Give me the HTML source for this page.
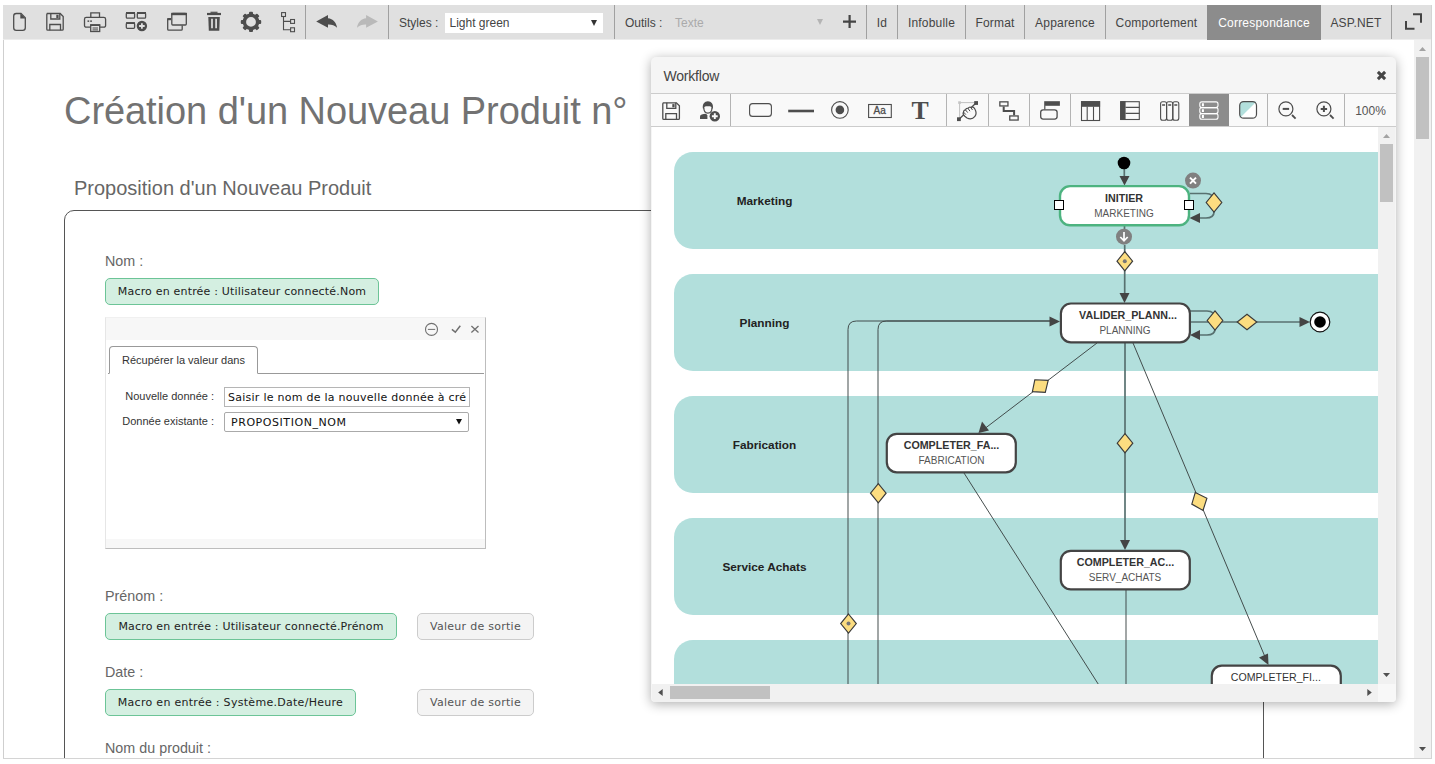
<!DOCTYPE html>
<html lang="fr">
<head>
<meta charset="utf-8">
<title>Création d'un Nouveau Produit</title>
<style>
*{box-sizing:border-box;margin:0;padding:0}
html,body{width:1435px;height:764px;overflow:hidden;background:#fff}
body{position:relative;font-family:"Liberation Sans",Arial,sans-serif;color:#444;font-size:12px}
.abs{position:absolute}
/* outer frame */
#frame{position:absolute;left:3px;top:5px;width:1429px;height:754px;border:1px solid #d4d4d4;border-left-color:#cfcfcf;border-top:0}
/* top toolbar */
#tb{position:absolute;left:3px;top:5px;width:1428px;height:35px;background:linear-gradient(#e0e0e0 0,#e0e0e0 34px,#ececec 34px)}
#tb .sep{position:absolute;top:0;width:1px;height:34px;background:#a0a0a0}
#tb .tab{position:absolute;top:0;height:35px;line-height:36px;text-align:center;font-size:12px;color:#444;white-space:nowrap;letter-spacing:.2px}
#tb .tab.on{background:#8c8c8c;color:#fff}
#tb .lbl{position:absolute;top:0;height:35px;line-height:36px;font-size:12px;color:#444;white-space:nowrap}
#tb svg{position:absolute}
.vd{font-family:"DejaVu Sans",Verdana,sans-serif}
/* form */
.h1{position:absolute;left:64px;top:89px;font-size:38px;line-height:44px;color:#727272;white-space:nowrap;letter-spacing:-.06px}
.h2{position:absolute;left:74px;top:176px;font-size:20px;line-height:24px;color:#666;white-space:nowrap}
#fs{position:absolute;left:64px;top:210px;width:1200px;height:600px;border:1px solid #555;border-radius:10px 0 0 0}
.flabel{position:absolute;left:105px;font-size:14.300px;line-height:18px;color:#666;white-space:nowrap;letter-spacing:.02px}
.pill{position:absolute;height:26px;line-height:25px;border:1px solid #6cc497;background:#d4efe1;border-radius:5px;font-family:"DejaVu Sans",Verdana,sans-serif;font-size:11px;color:#222;text-align:center;white-space:nowrap}
.btn{position:absolute;height:27px;line-height:26.500px;border:1px solid #ccc;background:#f4f4f4;border-radius:5px;font-family:"DejaVu Sans",Verdana,sans-serif;font-size:11px;color:#555;text-align:center;white-space:nowrap;letter-spacing:.27px}
/* mapping panel */
#mp{position:absolute;left:105px;top:317px;width:381px;height:232px;border:1px solid #bdbdbd;border-left-color:#e6e6e6;border-top-color:#f0f0f0;background:#fff}
#mp .hd{position:absolute;left:0;top:0;width:379px;height:22px;background:#f7f7f7}
#mp .ft{position:absolute;left:0;bottom:0;width:379px;height:9px;background:#f7f7f7}
#mp .tabline{position:absolute;left:2px;top:55px;width:376px;height:1px;background:#999}
#mp .tab1{position:absolute;left:3px;top:28px;width:149px;height:28px;border:1px solid #999;border-bottom:1px solid #fff;border-radius:4px 4px 0 0;background:#fff;font-size:11px;line-height:27px;text-align:center;color:#333;white-space:nowrap}
#mp .l{position:absolute;right:271px;font-size:11px;line-height:14px;color:#333;white-space:nowrap;text-align:right}
#mp .inp{position:absolute;left:118px;width:247px;height:21px;border:1px solid #999;background:#fff;font-family:"DejaVu Sans",Verdana,sans-serif;color:#111;white-space:nowrap;overflow:hidden}
.wsep{position:absolute;top:37px;width:1px;height:32px;background:#b4b4b4}
</style>
</head>
<body>
<div id="frame"></div>

<!-- ============ TOP TOOLBAR ============ -->
<div id="tb">
  <!--ICONS_S--><svg style="left:0;top:0" width="400" height="34" viewBox="3 5 400 34" fill="none" stroke="#4d4d4d" stroke-width="1.3">
    <!-- new file -->
    <path d="M16.3 13.500H21L25.300 17.800V27.700a2.600 2.600 0 0 1-2.600 2.600H16.300a2.600 2.600 0 0 1-2.600-2.600V16.100a2.600 2.600 0 0 1 2.600-2.600z"/>
    <path d="M20.300 13.400L25.500 18.600H20.300z" fill="#4d4d4d" stroke="none"/>
    <!-- save -->
    <path d="M46.800 13.500H60.200L63.200 16.500V29.200a1 1 0 0 1-1 1H47.800a1 1 0 0 1-1-1V14.500a1 1 0 0 1 1-1z"/>
    <path d="M50.800 13.500V19H59.800V13.500M49.800 30.200V24.500H60.500V30.200"/>
    <rect x="56.300" y="14.800" width="2.300" height="3.200" fill="#4d4d4d" stroke="none"/>
    <!-- print -->
    <path d="M90.800 17.300V12.800H99.500V17.300"/>
    <path d="M90.400 27.200H86.300a1.800 1.800 0 0 1-1.800-1.800V19.200a1.800 1.800 0 0 1 1.800-1.800H103.800a1.800 1.800 0 0 1 1.800 1.800V25.400a1.800 1.800 0 0 1-1.800 1.800H100"/>
    <rect x="90.700" y="25" width="9" height="6.500"/>
    <path d="M90.200 25.100H100.200" stroke-width="1.800"/>
    <path d="M92.500 28H98M92.500 29.900H98" stroke-width="1"/>
    <rect x="87.500" y="20.400" width="1.700" height="1.500" fill="#4d4d4d" stroke="none"/>
    <rect x="90.200" y="20.400" width="1.700" height="1.500" fill="#4d4d4d" stroke="none"/>
    <!-- add widgets -->
    <rect x="126.300" y="12.800" width="8.300" height="5.400" rx="1"/>
    <path d="M126 13H135M137 13H146" stroke-width="1.800"/>
    <rect x="137.300" y="12.800" width="8.300" height="5.400" rx="1"/>
    <rect x="126.300" y="22.900" width="8.300" height="5.400" rx="1"/>
    <path d="M126 23.100H135" stroke-width="1.800"/>
    <circle cx="141.900" cy="26" r="5.200" fill="#4d4d4d" stroke="none"/>
    <path d="M141.900 23.200V28.800M139.100 26H144.700" stroke="#e0e0e0" stroke-width="1.800"/>
    <!-- windows -->
    <path d="M171 18.700H168.700a1 1 0 0 0-1 1V29.200a1 1 0 0 0 1 1H181.200a1 1 0 0 0 1-1V25.600"/>
    <path d="M167.200 19.200H171" stroke-width="2"/>
    <rect x="171.800" y="13.500" width="14.500" height="11.500" rx="1"/>
    <path d="M171.200 14H187" stroke-width="2.400"/>
    <!-- trash -->
    <path d="M207 14H221" stroke-width="2.200"/>
    <path d="M210.500 12.300H217.500" stroke-width="1.200"/>
    <path d="M208.300 17H219.800L219.300 30.800H208.800z" fill="#4d4d4d" stroke="none"/>
    <path d="M212 18.800V28.200M216.100 18.800V28.200" stroke="#e0e0e0" stroke-width="1.700"/>
    <!-- gear -->
    <g transform="translate(251 21.900)">
      <circle r="6.600" stroke-width="3.400"/>
      <g fill="#4d4d4d" stroke="none">
        <rect x="-2" y="-10.200" width="4" height="3.600" rx="1"/>
        <rect x="-2" y="-10.200" width="4" height="3.600" rx="1" transform="rotate(45)"/>
        <rect x="-2" y="-10.200" width="4" height="3.600" rx="1" transform="rotate(90)"/>
        <rect x="-2" y="-10.200" width="4" height="3.600" rx="1" transform="rotate(135)"/>
        <rect x="-2" y="-10.200" width="4" height="3.600" rx="1" transform="rotate(180)"/>
        <rect x="-2" y="-10.200" width="4" height="3.600" rx="1" transform="rotate(225)"/>
        <rect x="-2" y="-10.200" width="4" height="3.600" rx="1" transform="rotate(270)"/>
        <rect x="-2" y="-10.200" width="4" height="3.600" rx="1" transform="rotate(315)"/>
      </g>
    </g>
    <!-- tree -->
    <g stroke-width="1.100">
      <rect x="281.600" y="12.600" width="3.900" height="3.900"/>
      <rect x="290.600" y="19.500" width="3.900" height="3.900"/>
      <rect x="290.600" y="27.800" width="3.900" height="3.900"/>
      <path d="M283.500 16.500V29.700H290.600M283.500 21.400H290.600"/>
    </g>
    <!-- undo -->
    <path d="M316.200 21.400L328 14.900V18.300C333 18.800 336.300 22.500 337.100 27.800C334.500 25.300 331.800 24.400 328 24.500V27.800z" fill="#4d4d4d" stroke="none"/>
    <!-- redo -->
    <path d="M377.900 21.400L366.100 14.900V18.300C361.100 18.800 357.800 22.500 357 27.800C359.600 25.300 362.300 24.400 366.100 24.500V27.800z" fill="#b9b9b9" stroke="none"/>
</svg>
<!--ICONS_E-->
  <div class="sep" style="left:302px"></div>
  <div class="sep" style="left:385px"></div>
  <div class="lbl" style="left:396px">Styles :</div>
  <div class="abs" style="left:442px;top:8px;width:158px;height:20px;background:#fff;font-size:12px;line-height:20px;color:#444;padding-left:4.5px">Light green<svg style="left:146px;top:7px" width="6" height="6" viewBox="0 0 6 6"><path d="M0 0H6L3 6z" fill="#333"/></svg></div>
  <div class="sep" style="left:611px"></div>
  <div class="lbl" style="left:622px">Outils :</div>
  <div class="lbl" style="left:672px;color:#aaa">Texte</div>
  <svg style="left:814px;top:14px" width="6" height="6" viewBox="0 0 6 6"><path d="M0 0H6L3 6z" fill="#b4b4b4"/></svg>
  <svg style="left:840px;top:10px" width="13" height="13" viewBox="0 0 13 13"><path d="M6.600 0v13M0 6.600h13" stroke="#444" stroke-width="2.200" fill="none"/></svg>
  <div class="sep" style="left:863px"></div>
  <div class="tab" style="left:864px;width:30px">Id</div>
  <div class="sep" style="left:894px"></div>
  <div class="tab" style="left:895px;width:67px">Infobulle</div>
  <div class="sep" style="left:962px"></div>
  <div class="tab" style="left:963px;width:58px">Format</div>
  <div class="sep" style="left:1021px"></div>
  <div class="tab" style="left:1022px;width:80px">Apparence</div>
  <div class="sep" style="left:1102px"></div>
  <div class="tab" style="left:1103px;width:101px">Comportement</div>
  <div class="tab on" style="left:1204px;width:114px">Correspondance</div>
  <div class="tab" style="left:1318px;width:70px">ASP.NET</div>
  <div class="sep" style="left:1388px"></div>
  <svg style="left:1402px;top:8px" width="17" height="17" viewBox="0 0 17 17"><path d="M8 1.200h8v8.500M1 8v7.800h8.500" stroke="#444" stroke-width="2" fill="none"/></svg>
</div>

<!-- ============ FORM ============ -->
<div class="h1">Création d'un Nouveau Produit n°</div>
<div class="h2">Proposition d'un Nouveau Produit</div>
<div id="fs"></div>

<div class="flabel" style="top:252px">Nom :</div>
<div class="pill" style="left:105px;top:278px;width:274px;height:27px;line-height:26.500px;letter-spacing:.19px">Macro en entrée : Utilisateur connecté.Nom</div>

<div id="mp">
  <div class="hd"></div>
  <!--MPI_S--><svg class="abs" style="left:0;top:0" width="379" height="22" viewBox="106 318 379 22" fill="none" stroke="#707070" stroke-width="1">
    <circle cx="431.500" cy="329.400" r="6" stroke-width="1.100"/>
    <path d="M427.900 329.400H435.200"/>
    <path d="M451.900 329.400L455.300 332.100L460.300 325.700" stroke-width="1.500"/>
    <path d="M471.400 325.900L478.500 332.500M478.500 325.900L471.400 332.500" stroke-width="1.300"/>
</svg>
<!--MPI_E-->
  <div class="tabline"></div>
  <div class="tab1">Récupérer la valeur dans</div>
  <div class="l" style="top:71px">Nouvelle donnée :</div>
  <div class="inp" style="top:69px;width:246px;height:20px;font-size:11px;line-height:20px;padding-left:3px;letter-spacing:.26px;border-color:#b5b5b5">Saisir le nom de la nouvelle donnée à cré</div>
  <div class="l" style="top:96px">Donnée existante :</div>
  <div class="inp" style="top:94px;width:245px;height:20px;font-size:11px;line-height:20px;padding-left:6px;letter-spacing:.56px;border-radius:2px;border-color:#aaa">PROPOSITION_NOM<svg class="abs" style="right:6px;top:6px" width="6" height="6" viewBox="0 0 6 6"><path d="M0 0H6L3 5.600z" fill="#111"/></svg></div>
  <div class="ft"></div>
</div>

<div class="flabel" style="top:587px">Prénom :</div>
<div class="pill" style="left:105px;top:613px;width:292px;height:27px;line-height:26.500px;letter-spacing:.19px">Macro en entrée : Utilisateur connecté.Prénom</div>
<div class="btn" style="left:417px;top:613px;width:117px">Valeur de sortie</div>

<div class="flabel" style="top:663px">Date :</div>
<div class="pill" style="left:105px;top:689px;width:251px;height:27px;line-height:26.500px;letter-spacing:.29px">Macro en entrée : Système.Date/Heure</div>
<div class="btn" style="left:417px;top:689px;width:117px">Valeur de sortie</div>

<div class="flabel" style="top:739px">Nom du produit :</div>

<!-- cover below frame -->
<div class="abs" style="left:0;top:759px;width:1435px;height:5px;background:#fff"></div>
<div class="abs" style="left:3px;top:758px;width:1429px;height:1px;background:#d4d4d4"></div>

<!-- main page scrollbar -->
<div class="abs" style="left:1414px;top:40px;width:17px;height:718px;background:#f1f1f1">
  <div class="abs" style="left:2px;top:17px;width:13px;height:82px;background:#c1c1c1"></div>
  <svg class="abs" style="left:5px;top:7px" width="7" height="4" viewBox="0 0 7 4"><path d="M0 4L3.500 0L7 4z" fill="#a3a3a3"/></svg>
  <svg class="abs" style="left:5px;top:707px" width="7" height="4" viewBox="0 0 7 4"><path d="M0 0L3.500 4L7 0z" fill="#505050"/></svg>
</div>
<!--WFSTART-->
<div id="wf" class="abs" style="left:651px;top:57px;width:745px;height:645px;background:#f5f5f5;border-radius:5px 5px 4px 4px;box-shadow:0 2px 12px rgba(0,0,0,.32)">
  <div class="abs" style="left:12.500px;top:11px;font-size:14px;line-height:16px;color:#444;letter-spacing:-.2px">Workflow</div>
  <svg class="abs" style="left:725px;top:13px" width="11" height="11" viewBox="0 0 11 11"><path d="M1.900 1.900l7.200 7.200M9.100 1.900l-7.200 7.200" stroke="#454545" stroke-width="3" fill="none"/></svg>
  <!-- toolbar -->
  <div class="abs" style="left:0;top:36px;width:745px;height:34px;border-top:1px solid #ccc;border-bottom:1px solid #ccc;background:#f9f9f9"></div>
  <div class="abs" style="left:538px;top:37px;width:40px;height:32px;background:#8c8c8c"></div>
  <div class="wsep" style="left:79px"></div>
  <div class="wsep" style="left:295px"></div>
  <div class="wsep" style="left:337px"></div>
  <div class="wsep" style="left:378px"></div>
  <div class="wsep" style="left:419px"></div>
  <div class="wsep" style="left:616px"></div>
  <div class="wsep" style="left:693px"></div>
  <div class="abs" style="left:694px;top:37px;width:51px;height:32px;line-height:35px;text-align:center;font-size:12px;color:#555">100%</div>
  <!--WFI_S--><svg class="abs" style="left:0;top:36px" width="745" height="34" viewBox="651 93 745 34" fill="none" stroke="#4d4d4d" stroke-width="1.300">
    <!-- save -->
    <path d="M662.800 102.800H676.400L679.400 105.800V118.400a1 1 0 0 1-1 1H663.800a1 1 0 0 1-1-1V103.800a1 1 0 0 1 1-1z"/>
    <path d="M666.800 102.800V108.300H675.800V102.800M665.800 119.400V113.700H676.500V119.400"/>
    <rect x="672.300" y="104.100" width="2.300" height="3.200" fill="#4d4d4d" stroke="none"/>
    <!-- user plus -->
    <path d="M702.900 108.600C702.200 104 704.500 101.200 707.900 101.200C711.300 101.200 713.600 104 712.900 108.600L711.800 108.600C712 106.800 711 106.300 707.900 106.300C704.800 106.300 703.800 106.800 704 108.600z" fill="#4d4d4d" stroke="none"/>
    <path d="M703.800 107.500C703.800 110.800 705.500 113.100 707.900 113.100C710.300 113.100 712 110.800 712 107.500" stroke-width="1.200"/>
    <path d="M700 118.900V116.200C700 114.800 702.600 114.200 706.200 113.800L707.400 115.500V118.900z" fill="#4d4d4d" stroke="none"/>
    <circle cx="714.800" cy="116.200" r="5.200" fill="#4d4d4d" stroke="none"/>
    <path d="M714.800 113.300V119.100M711.900 116.200H717.700" stroke="#f9f9f9" stroke-width="1.900"/>
    <!-- rect -->
    <rect x="749.600" y="103.600" width="21.800" height="12.800" rx="3" stroke-width="1.100"/>
    <!-- line -->
    <path d="M788.200 111H814" stroke-width="2.600"/>
    <!-- radio -->
    <circle cx="839.900" cy="109.900" r="8.300" stroke-width="1.100"/>
    <circle cx="839.900" cy="109.900" r="4.300" fill="#4d4d4d" stroke="none"/>
    <!-- Aa -->
    <rect x="868.600" y="104.500" width="22.700" height="13" stroke-width="1.100"/>
    <text x="879.700" y="114" font-size="10" font-family="'Liberation Sans',Arial,sans-serif" stroke="#4d4d4d" stroke-width="0.3" text-anchor="middle" fill="#4d4d4d">Aa</text>
    <!-- T -->
    <text x="920.100" y="119" font-size="25.800" font-family="'Liberation Serif','Times New Roman',serif" font-weight="bold" text-anchor="middle" fill="#4d4d4d" stroke="none">T</text>
    <!-- connector -->
    <path d="M959.600 117.500V102.600H974.500" stroke="#c0c0c0" stroke-width="1"/>
    <rect x="958.200" y="101.300" width="2.700" height="2.600" fill="#c4c4c4" stroke="none"/>
    <path d="M959 119.200L976 103" stroke-width="1.300"/>
    <rect x="957" y="117.300" width="3.800" height="3.800" fill="#4d4d4d" stroke="none"/>
    <rect x="974.200" y="101.100" width="3.800" height="3.800" fill="#4d4d4d" stroke="none"/>
    <path d="M964.800 116.200C963.200 114.800 962.900 113 963.600 112.200C963.300 110.900 964.300 109.800 965.500 109.900C965.800 108.600 967 107.900 968.100 108.400C968.700 107.200 970.100 106.800 971 107.500C972.300 106.600 973.800 107.100 974.700 108.700C976.200 111.300 976.600 114.300 974.900 116.400C973 118.700 969.600 119.200 967 118z" fill="#f9f9f9" stroke-width="1.200"/>
    <path d="M963.800 112.300L965.800 114.600M965.600 110L967.700 112.600M968.100 108.600L970 111.200M971 107.700L972.500 110" stroke-width="1"/>
    <!-- hierarchy -->
    <rect x="999.850" y="101.850" width="8.100" height="4.100" stroke-width="1.300"/>
    <rect x="1009.750" y="115.950" width="8.400" height="4.100" stroke-width="1.300"/>
    <path d="M1003.700 106.600V111H1014.100V115.300" stroke-width="2"/>
    <!-- header box -->
    <rect x="1044.200" y="101.200" width="15.700" height="4.600" fill="#4d4d4d" stroke="none"/>
    <path d="M1044.800 105.500V109.500" stroke-width="1.200"/>
    <rect x="1040.700" y="109.800" width="16.400" height="9.300" rx="2.500"/>
    <!-- table cols -->
    <rect x="1081.500" y="101.700" width="18.100" height="18.800" stroke-width="1.100"/>
    <rect x="1081" y="101.200" width="19.100" height="5.600" fill="#4d4d4d" stroke="none"/>
    <path d="M1087.200 106.500V120.500M1093.500 106.500V120.500" stroke-width="1.100"/>
    <!-- table rows -->
    <rect x="1120.700" y="101.700" width="18.600" height="17.800" stroke-width="1.100"/>
    <rect x="1120.200" y="101.200" width="5.400" height="18.800" fill="#4d4d4d" stroke="none"/>
    <path d="M1125.500 107.400H1139.500M1125.500 113.400H1139.500" stroke-width="1.100"/>
    <!-- columns -->
    <g stroke-width="1.100">
      <rect x="1160.600" y="101.700" width="6" height="18.500" rx="2"/>
      <rect x="1166.600" y="101.700" width="6.200" height="18.500" rx="2"/>
      <rect x="1172.800" y="101.700" width="6" height="18.500" rx="2"/>
    </g>
    <path d="M1162.100 105H1165.100M1168.200 105H1171.200M1174.300 105H1177.300" stroke-width="1.600"/>
    <!-- rows active -->
    <g stroke="#fff" stroke-width="1.100">
      <rect x="1199.800" y="101.900" width="18.200" height="5.700" rx="2"/>
      <rect x="1199.800" y="107.600" width="18.200" height="6" rx="2"/>
      <rect x="1199.800" y="113.600" width="18.200" height="5.700" rx="2"/>
    </g>
    <path d="M1202.900 103.300V106.200M1202.900 109.200V112.100M1202.900 115V117.900" stroke="#fff" stroke-width="2"/>
    <!-- colour -->
    <rect x="1239.700" y="101.600" width="16.800" height="16.600" rx="4" fill="#fff" stroke="none"/>
    <path d="M1243.700 101.600H1256.500L1239.700 118.200V105.600A4 4 0 0 1 1243.700 101.600z" fill="#b2dfdc" stroke="none"/>
    <rect x="1239.700" y="101.600" width="16.800" height="16.600" rx="4" stroke-width="1.200"/>
    <!-- zoom out -->
    <circle cx="1285.900" cy="108.900" r="7" stroke-width="1.200"/>
    <path d="M1282.700 108.900H1289.100" stroke-width="2"/>
    <path d="M1292 115L1295.600 118.600" stroke-width="1.800"/>
    <!-- zoom in -->
    <circle cx="1323.900" cy="108.900" r="7" stroke-width="1.200"/>
    <path d="M1320.700 108.900H1327.100M1323.900 105.700V112.100" stroke-width="2"/>
    <path d="M1330 115L1333.600 118.600" stroke-width="1.800"/>
</svg>
<!--WFI_E-->
  <!-- canvas -->
  <div class="abs" style="left:1px;top:70px;width:726px;height:557px;background:#fff;overflow:hidden">
  <svg width="726" height="557" viewBox="652 127 726 557" style="display:block;font-family:'Liberation Sans',Arial,sans-serif">
    <g fill="#b2dfdc">
      <rect x="674" y="152" width="800" height="97" rx="19"/>
      <rect x="674" y="274" width="800" height="97" rx="19"/>
      <rect x="674" y="396" width="800" height="97" rx="19"/>
      <rect x="674" y="518" width="800" height="97" rx="19"/>
      <rect x="674" y="640" width="800" height="97" rx="19"/>
    </g>
    <g font-size="11.800" font-weight="bold" fill="#222" text-anchor="middle">
      <text x="764.5" y="205">Marketing</text>
      <text x="764.5" y="327">Planning</text>
      <text x="764.5" y="449">Fabrication</text>
      <text x="764.5" y="571">Service Achats</text>
    </g>
    <!-- links -->
    <g fill="none" stroke="#587170" stroke-width="1.700">
      <path d="M1124.300 169V178"/>
      <path d="M1124.500 226V230M1124.700 245V294"/>
      <path d="M1190 193.500H1206q8 0 8 8M1214 212q0 6-8 6H1199"/>
      <path d="M1190 311H1207q8 0 8 8M1215 329q0 6-8 6H1199"/>
      <path d="M1190 322H1300"/>
      <path d="M1125 343V541"/>
    </g>
    <g fill="none" stroke="#3c4444" stroke-width="0.950">
      <path d="M848 700V329.500q0-8.500 8.500-8.500H1051"/>
      <path d="M878 700V329.500q0-8.500 8.500-8.500H1051"/>
      <path d="M1097 343L985.500 428"/>
      <path d="M1133 343L1265.500 658"/>
      <path d="M964 473L1102 690"/>
      <path d="M1126 590V690"/>
    </g>
    <!-- arrowheads -->
    <g fill="#444" stroke="none">
      <path d="M1119.500 176h10l-5 9.500z"/>
      <path d="M1119.500 293h10l-5 10z"/>
      <path d="M1049.500 316.500v10l10.500-5z"/>
      <path d="M1200 213v10l-10.500-5z"/>
      <path d="M1200 330v10l-10-5z"/>
      <path d="M1299.500 317v10l10.500-5z"/>
      <path d="M1120 540h10l-5 10z"/>
      <path d="M978.500 433l3.500-11.500l7 9z"/>
      <path d="M1268.500 665l-9.500-7.500l9-4z"/>
    </g>
    <!-- diamonds -->
    <g fill="#fcdd80" stroke="#3a3a3a" stroke-width="1.150">
      <path d="M1214 192.9L1221.8 202.5L1214 212.1L1206.2 202.5z"/>
      <path d="M1124.8 251.6L1132.6 261.2L1124.8 270.8L1117.0 261.2z"/>
      <path d="M1215 310.9L1222.8 320.5L1215 330.1L1207.2 320.5z"/>
      <path d="M1247 314.2L1256.8 322L1247 329.8L1237.2 322z"/>
      <path d="M1034.800 379.800L1048.200 380.400L1045.300 392.300L1032.400 391.600z"/>
      <path d="M1125 433.6L1132.8 443.2L1125 452.8L1117.2 443.2z"/>
      <path d="M1195.300 492.400L1206.900 498.300L1203 510.400L1191.800 504.100z"/>
      <path d="M878.3 483.6L886.1 493.2L878.3 502.8L870.5 493.2z"/>
      <path d="M848.5 614.0L856.3 623.6L848.5 633.2L840.7 623.6z"/>
    </g>
    <circle cx="1124.800" cy="261.200" r="2" fill="#777"/>
    <circle cx="848.500" cy="623.600" r="2" fill="#777"/>
    <!-- start / end -->
    <circle cx="1124" cy="163" r="6.300" fill="#000"/>
    <circle cx="1320" cy="322" r="9.800" fill="#fff" stroke="#111" stroke-width="1.200"/>
    <circle cx="1320" cy="322" r="5.800" fill="#000"/>
    <!-- nodes -->
    <g fill="#fff" stroke="#444" stroke-width="2.200">
      <rect x="1060" y="186.100" width="129" height="39.200" rx="10" stroke="#4db380" stroke-width="2.400"/>
      <rect x="1060.900" y="303.500" width="129" height="38.800" rx="10"/>
      <rect x="886.800" y="433.800" width="129" height="38.500" rx="10"/>
      <rect x="1060.800" y="550.800" width="129" height="38.600" rx="10"/>
      <rect x="1211.800" y="665.700" width="129" height="38.600" rx="10"/>
    </g>
    <g font-size="10.700" font-weight="bold" fill="#333" text-anchor="middle">
      <text x="1124" y="202">INITIER</text>
      <text x="1128" y="319">VALIDER_PLANN...</text>
      <text x="951.500" y="449">COMPLETER_FA...</text>
      <text x="1125.500" y="566">COMPLETER_AC...</text>
      <text x="1275.800" y="681" font-weight="normal" font-size="10.600">COMPLETER_FI...</text>
    </g>
    <g font-size="10" fill="#555" text-anchor="middle">
      <text x="1124" y="217">MARKETING</text>
      <text x="1125" y="334">PLANNING</text>
      <text x="951.500" y="464">FABRICATION</text>
      <text x="1125" y="581">SERV_ACHATS</text>
    </g>
    <!-- selection handles -->
    <rect x="1054.500" y="200.500" width="9" height="9" fill="#fff" stroke="#000" stroke-width="1"/>
    <rect x="1184.500" y="200.500" width="9" height="9" fill="#fff" stroke="#000" stroke-width="1"/>
    <!-- badges -->
    <circle cx="1193" cy="180.600" r="8" fill="#808080"/>
    <path d="M1190 177.600l6 6M1196 177.600l-6 6" stroke="#fff" stroke-width="2" fill="none"/>
    <circle cx="1124" cy="236.700" r="8" fill="#808080"/>
    <path d="M1124 232v8.500M1120.300 237l3.700 3.800l3.700-3.800" stroke="#fff" stroke-width="1.700" fill="none"/>
  </svg>
  </div>
  <!-- vertical scrollbar -->
  <div class="abs" style="left:727px;top:70px;width:17px;height:557px;background:#f1f1f1">
    <div class="abs" style="left:2px;top:17px;width:13px;height:58px;background:#c1c1c1"></div>
    <svg class="abs" style="left:5px;top:7px" width="7" height="4" viewBox="0 0 7 4"><path d="M0 4L3.500 0L7 4z" fill="#a3a3a3"/></svg>
    <svg class="abs" style="left:5px;top:546px" width="7" height="4" viewBox="0 0 7 4"><path d="M0 0L3.500 4L7 0z" fill="#505050"/></svg>
  </div>
  <!-- horizontal scrollbar -->
  <div class="abs" style="left:1px;top:627px;width:726px;height:18px;background:#f1f1f1;border-radius:0 0 0 4px">
    <div class="abs" style="left:18px;top:2px;width:100px;height:13px;background:#c1c1c1"></div>
    <svg class="abs" style="left:6px;top:5px" width="5" height="7" viewBox="0 0 5 7"><path d="M4.700 0L0.200 3.500L4.700 7z" fill="#505050"/></svg>
    <svg class="abs" style="left:715px;top:5px" width="5" height="7" viewBox="0 0 5 7"><path d="M0.300 0L4.800 3.500L0.300 7z" fill="#505050"/></svg>
  </div>
  <div class="abs" style="left:727px;top:627px;width:18px;height:18px;background:#f8f8f8;border-radius:0 0 4px 0"></div>
</div>
<!--WFEND-->
</body>
</html>
